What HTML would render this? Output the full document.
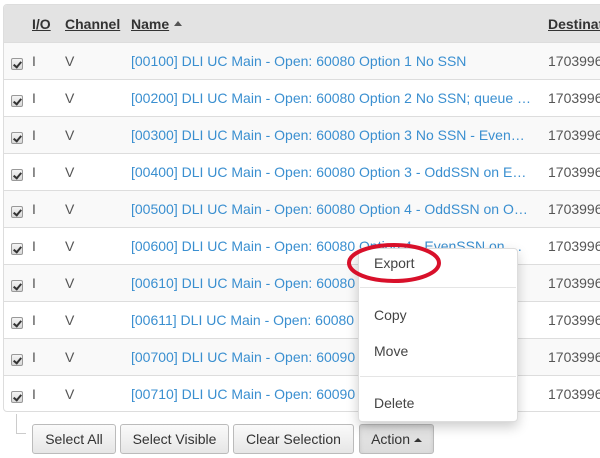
<!DOCTYPE html>
<html><head><meta charset="utf-8"><style>
*{box-sizing:border-box;margin:0;padding:0}
body{width:600px;height:458px;background:#fff;font-family:"Liberation Sans",Arial,sans-serif;font-size:14px;color:#555;position:relative;overflow:hidden}
.tbl{position:absolute;left:3px;top:4px;width:610px;height:408px;border:1px solid #ddd;border-radius:4px;overflow:hidden;background:#fff}
.hdr{position:absolute;left:0;top:0;width:100%;height:37px;background:#e3e3e3}
.h{position:absolute;top:11px;font-weight:bold;color:#333;text-decoration:underline;font-size:14px}
.row{position:absolute;left:0;width:100%;height:37px;border-top:1px solid #ddd}
.row.g{background:#f9f9f9}
.row span{position:absolute;top:10px;white-space:nowrap}
.cb{position:absolute;left:7px;top:15px;width:12px;height:12px;border:1px solid #999;border-radius:2px;background:linear-gradient(#f4f4f4,#d8d8d8)}
.cb:after{content:"";position:absolute;left:3px;top:1px;width:3px;height:6px;border:solid #333;border-width:0 2px 2px 0;transform:rotate(40deg)}
.nm{color:#3a8fd0}
.btn{position:absolute;top:424px;height:30px;border:1px solid #bbb;border-radius:3px;background:linear-gradient(#fafafa,#e6e6e6);color:#333;font-size:14px;text-align:center;line-height:28px}
.menu{position:absolute;left:358px;top:248px;width:160px;height:174px;background:#fff;border:1px solid #ddd;border-radius:4px;box-shadow:0 5px 12px rgba(0,0,0,.2)}
.mi{position:absolute;left:15px;font-size:14px;color:#444}
.dv{position:absolute;left:1px;right:1px;height:1px;background:#e5e5e5}
</style></head><body>
<div class="tbl">
<div class="hdr">
<span class="h" style="left:28px">I/O</span>
<span class="h" style="left:61px">Channel</span>
<span class="h" style="left:127px">Name</span><span style="position:absolute;left:170px;top:16px;width:0;height:0;border-left:4px solid transparent;border-right:4px solid transparent;border-bottom:5px solid #555"></span>
<span class="h" style="left:544px">Destination</span>
</div>
</div>
<div style="position:absolute;left:16px;top:414px;width:10px;height:20px;border-left:1px solid #ccc;border-bottom:1px solid #ccc"></div>
<div class="btn" style="left:32px;width:84px">Select All</div>
<div class="btn" style="left:120px;width:109px">Select Visible</div>
<div class="btn" style="left:233px;width:121px">Clear Selection</div>
<div class="btn" style="left:359px;width:75px;background:linear-gradient(#e6e6e6,#dcdcdc);box-shadow:inset 0 2px 4px rgba(0,0,0,.1)">Action <span style="display:inline-block;width:0;height:0;border-left:4px solid transparent;border-right:4px solid transparent;border-bottom:4px solid #333;vertical-align:2px"></span></div>
<div class="menu">
<span class="mi" style="top:6px">Export</span>
<div class="dv" style="top:38px"></div>
<span class="mi" style="top:58px">Copy</span>
<span class="mi" style="top:94px">Move</span>
<div class="dv" style="top:127px"></div>
<span class="mi" style="top:146px">Delete</span>
</div>
<svg style="position:absolute;left:0;top:0" width="600" height="458"><ellipse cx="394" cy="263" rx="45" ry="18" fill="none" stroke="#d8102a" stroke-width="4"/></svg>
<script>
var names=["[00100] DLI UC Main - Open: 60080 Option 1 No SSN","[00200] DLI UC Main - Open: 60080 Option 2 No SSN; queue …","[00300] DLI UC Main - Open: 60080 Option 3 No SSN - Even…","[00400] DLI UC Main - Open: 60080 Option 3 - OddSSN on E…","[00500] DLI UC Main - Open: 60080 Option 4 - OddSSN on O…","[00600] DLI UC Main - Open: 60080 Option 4 - EvenSSN on …","[00610] DLI UC Main - Open: 60080","[00611] DLI UC Main - Open: 60080","[00700] DLI UC Main - Open: 60090","[00710] DLI UC Main - Open: 60090"];
var t=document.querySelector('.tbl'),h='';
for(var i=0;i<10;i++){h+='<div class="row'+(i%2==0?' g':'')+'" style="top:'+(37+i*37)+'px"><div class="cb"></div><span style="left:28px">I</span><span style="left:61px">V</span><span class="nm" style="left:127px">'+names[i]+'</span><span style="left:544px">1703996</span></div>';}
t.insertAdjacentHTML('beforeend',h);
</script>
</body></html>
